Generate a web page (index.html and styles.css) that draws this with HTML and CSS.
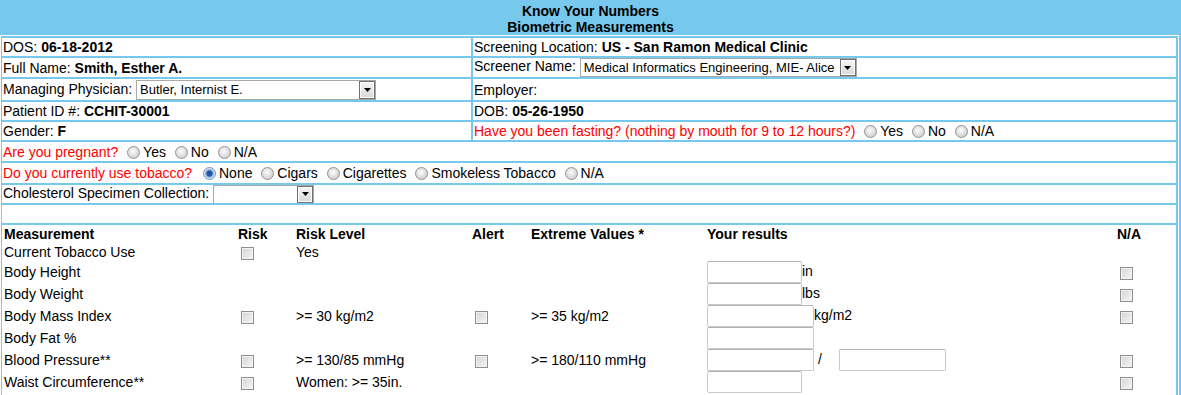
FILE: index.html
```html
<!DOCTYPE html>
<html lang="en">
<head>
    <meta charset="UTF-8">
    <meta name="viewport" content="width=device-width, initial-scale=1.0">
    <title>Know Your Numbers</title>

    <link rel="stylesheet" href="styles.css">
</head>
<body>

<div class="title">Know Your Numbers<br>Biometric Measurements</div>

<div class="sheet">
    <!-- patient info, two columns -->
    <div class="cell"><span>DOS: <b>06-18-2012</b></span></div>
    <div class="cell"><span>Screening Location: <b>US - San Ramon Medical Clinic</b></span></div>

    <div class="cell"><span>Full Name: <b>Smith, Esther A.</b></span></div>
    <div class="cell"><span>Screener Name: <span class="dropdown screener"><select><option>Medical Informatics Engineering, MIE- Alice</option></select><span class="arrow"><svg width="7" height="4" viewBox="0 0 7 4"><path d="M0 0h7L3.5 4z" fill="#000"/></svg></span></span></span></div>

    <div class="cell"><span>Managing Physician: <span class="dropdown physician"><select><option>Butler, Internist E.</option></select><span class="arrow"><svg width="7" height="4" viewBox="0 0 7 4"><path d="M0 0h7L3.5 4z" fill="#000"/></svg></span></span></span></div>
    <div class="cell"><span>Employer:</span></div>

    <div class="cell"><span>Patient ID #: <b>CCHIT-30001</b></span></div>
    <div class="cell"><span>DOB: <b>05-26-1950</b></span></div>

    <div class="cell"><span>Gender: <b>F</b></span></div>
    <div class="cell"><span><span class="ask">Have you been fasting? (nothing by mouth for 9 to 12 hours?)</span> <input type="radio" class="dot" name="fast">Yes <input type="radio" class="dot" name="fast">No <input type="radio" class="dot" name="fast">N/A</span></div>

    <!-- questions, full width -->
    <div class="cell wide"><span><span class="ask">Are you pregnant?</span> <input type="radio" class="dot" name="preg">Yes <input type="radio" class="dot" name="preg">No <input type="radio" class="dot" name="preg">N/A</span></div>

    <div class="cell wide"><span><span class="ask">Do you currently use tobacco?</span> <input type="radio" class="dot first" name="tob" checked>None <input type="radio" class="dot" name="tob">Cigars <input type="radio" class="dot" name="tob">Cigarettes <input type="radio" class="dot" name="tob">Smokeless Tobacco <input type="radio" class="dot" name="tob">N/A</span></div>

    <div class="cell wide"><span>Cholesterol Specimen Collection: <span class="dropdown specimen"><select><option></option></select><span class="arrow"><svg width="7" height="4" viewBox="0 0 7 4"><path d="M0 0h7L3.5 4z" fill="#000"/></svg></span></span></span></div>

    <div class="cell wide"></div>

    <!-- measurements -->
    <div class="cell wide block">
        <table class="measure">
            <colgroup>
                <col style="width:236px">
                <col style="width:58px">
                <col style="width:176px">
                <col style="width:59px">
                <col style="width:176px">
                <col style="width:410px">
                <col style="width:59px">
            </colgroup>
            <tr class="short">
                <th>Measurement</th>
                <th>Risk</th>
                <th>Risk Level</th>
                <th>Alert</th>
                <th>Extreme Values *</th>
                <th>Your results</th>
                <th>N/A</th>
            </tr>
            <tr class="short">
                <td>Current Tobacco Use</td>
                <td><input type="checkbox" class="box"></td>
                <td>Yes</td>
                <td></td>
                <td></td>
                <td></td>
                <td></td>
            </tr>
            <tr>
                <td>Body Height</td>
                <td></td>
                <td></td>
                <td></td>
                <td></td>
                <td><input type="text" class="num">in</td>
                <td><input type="checkbox" class="box"></td>
            </tr>
            <tr>
                <td>Body Weight</td>
                <td></td>
                <td></td>
                <td></td>
                <td></td>
                <td><input type="text" class="num">lbs</td>
                <td><input type="checkbox" class="box"></td>
            </tr>
            <tr>
                <td>Body Mass Index</td>
                <td><input type="checkbox" class="box"></td>
                <td>&gt;= 30 kg/m2</td>
                <td><input type="checkbox" class="box"></td>
                <td>&gt;= 35 kg/m2</td>
                <td><input type="text" class="num long">kg/m2</td>
                <td><input type="checkbox" class="box"></td>
            </tr>
            <tr>
                <td>Body Fat %</td>
                <td></td>
                <td></td>
                <td></td>
                <td></td>
                <td><input type="text" class="num long"></td>
                <td></td>
            </tr>
            <tr>
                <td>Blood Pressure**</td>
                <td><input type="checkbox" class="box"></td>
                <td>&gt;= 130/85 mmHg</td>
                <td><input type="checkbox" class="box"></td>
                <td>&gt;= 180/110 mmHg</td>
                <td><input type="text" class="num long"> / <input type="text" class="num long second"></td>
                <td><input type="checkbox" class="box"></td>
            </tr>
            <tr>
                <td>Waist Circumference**</td>
                <td><input type="checkbox" class="box"></td>
                <td>Women: &gt;= 35in.</td>
                <td></td>
                <td></td>
                <td><input type="text" class="num"></td>
                <td><input type="checkbox" class="box"></td>
            </tr>
        </table>
    </div>
</div>

</body>
</html>
```

FILE: styles.css
```css
body {
    margin: 0;
    background-color: #76c8ec;
    font: 14px "Liberation Sans", Arial, sans-serif;
    color: #000;
}
.title {
    height: 35px;
    box-sizing: border-box;
    padding-top: 3px;
    text-align: center;
    font-weight: bold;
    line-height: 16px;
}
.sheet {
    width: 1179px;
    box-sizing: border-box;
    border: 1px solid #fff;
    border-bottom: 0;
    padding: 2px 2px 0 1px;
    display: grid;
    grid-template-columns: 469px 1fr;
    grid-template-rows: 18px 19px 21px 18px 18px 19px 20px 18px 18px auto;
    gap: 2px;
}
.cell {
    background-color: #fff;
    padding: 0 1px;
    display: flex;
    align-items: center;
    white-space: nowrap;
    overflow: hidden;
}
.wide {
    grid-column: 1 / -1;
}
.block {
    display: block;
    padding: 0 0 6px 0;
}
.ask {
    color: #ff0000;
}

/* radios */
.dot {
    -webkit-appearance: none;
    appearance: none;
    width: 13px;
    height: 13px;
    box-sizing: border-box;
    margin: 0 3px 0 5px;
    border: 1px solid #929292;
    border-radius: 50%;
    background: radial-gradient(circle at 45% 40%, #fdfdfd, #d6d6d6 65%, #c2c2c2);
    vertical-align: -2px;
}
.dot:checked {
    border-color: #6f8fbd;
    background: radial-gradient(circle, #23549f 0 2.5px, #7da7db 3.5px, #eef4fb 5.5px);
}
.first {
    margin-left: 7px;
}

/* checkboxes */
.box {
    -webkit-appearance: none;
    appearance: none;
    width: 13px;
    height: 13px;
    box-sizing: border-box;
    margin: 0 0 0 3px;
    border: 1px solid #8f8f8f;
    background: linear-gradient(135deg, #d4d4d4, #f6f6f6);
    box-shadow: inset 0 0 0 1px #f2f2f2;
    vertical-align: middle;
}

/* select boxes */
.dropdown {
    display: inline-flex;
    vertical-align: middle;
    height: 19px;
    box-sizing: border-box;
    border: 1px solid #a9a9a9;
    background-color: #fff;
}
.dropdown select {
    -webkit-appearance: none;
    appearance: none;
    flex: 1;
    min-width: 0;
    height: 100%;
    margin: 0;
    padding: 0 0 0 3px;
    border: 0;
    background: transparent;
    font: 13px "Liberation Sans", Arial, sans-serif;
    color: #000;
    outline: none;
}
.dropdown .arrow {
    width: 16px;
    box-sizing: border-box;
    border: 1px solid #707070;
    background: linear-gradient(#f4f4f4, #d9d9d9);
    box-shadow: inset 0 0 0 1px #fff;
    display: flex;
    align-items: center;
    justify-content: center;
}
.physician {
    width: 240px;
    height: 20px;
}
.screener {
    width: 277px;
}
.specimen {
    width: 101px;
}

/* measurement table */
.measure {
    width: 100%;
    table-layout: fixed;
    border-collapse: collapse;
}
.measure th,
.measure td {
    padding: 0;
    height: 22px;
    text-align: left;
    white-space: nowrap;
}
.measure .short th,
.measure .short td {
    height: 18px;
}
.measure th:first-child,
.measure td:first-child {
    padding-left: 2px;
}
.num {
    width: 95px;
    height: 22px;
    box-sizing: border-box;
    margin: 0;
    padding: 1px 2px;
    border: 1px solid #c8c8c8;
    border-top-color: #b4b4b4;
    border-radius: 2px;
    font: 13px "Liberation Sans", Arial, sans-serif;
    vertical-align: middle;
}
.long {
    width: 107px;
}
.second {
    margin-left: 13px;
}
```
